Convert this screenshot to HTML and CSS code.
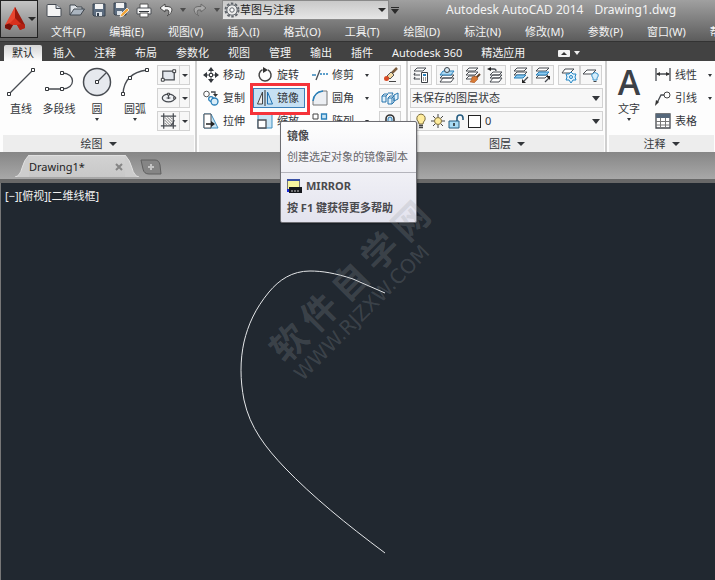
FILE: index.html
```html
<!DOCTYPE html>
<html lang="zh-CN">
<head>
  <meta charset="UTF-8">
  <meta name="viewport" content="width=device-width, initial-scale=1.0">
  <title>Autodesk AutoCAD 2014 - Drawing1.dwg</title>
  <link rel="stylesheet" href="styles.css">
</head>
<body>
  <header class="header">
    <button class="app-btn" aria-label="应用程序菜单">
      <svg width="22" height="26" viewBox="0 0 22 26">
        <path d="M11 1L1 22l5 2 3-5h4l3 5 5-2z" fill="#c32414"/>
        <path d="M11 1L1 19l4 2 6-7z" fill="#e8452f"/>
        <path d="M11 1v13l6 7 4-2z" fill="#9c180c"/>
        <path d="M1 19l5-2 3 2-3 5-5-2z" fill="#74100a"/>
        <path d="M21 19l-5-2-3 2 3 5 5-2z" fill="#b42012"/>
        <path d="M5 18l6-6 6 6-4 1H9z" fill="#d9301d"/>
      </svg>
      <span class="arrow dark"></span>
    </button>
    <div class="header-main">
      <div class="title-row">
        <div class="quick">
          <button aria-label="新建"><svg width="16" height="16" viewBox="0 0 16 16"><path d="M1 3.500q0-1 1-1h8l5 4v7q0 1-1 1H2q-1 0-1-1z" fill="#f4f4f4" stroke="#444a52"/><path d="M10 2.500v4h5" fill="#cfd5dc" stroke="#444a52"/></svg></button>
          <button aria-label="打开"><svg width="16" height="16" viewBox="0 0 16 16"><path d="M1 13V3h5l2 2h5v2" fill="#dfe3e8" stroke="#3f464e"/><path d="M1 13l4-6h10.500l-4 6z" fill="#aab4bf" stroke="#3f464e"/></svg></button>
          <button aria-label="保存"><svg width="14" height="14" viewBox="0 0 14 14"><path d="M1 1h12v12H2l-1-1z" fill="#5c6c7f" stroke="#38424e"/><path d="M3 1h8v5H3z" fill="#f3f3f3"/><path d="M4 9h6v4H4z" fill="#dce2e8"/><path d="M5 10h2v3H5z" fill="#34404e"/></svg></button>
          <button aria-label="另存为"><svg width="16" height="16" viewBox="0 0 16 16"><path d="M1 1h12v12H2l-1-1z" fill="#5c6c7f" stroke="#38424e"/><path d="M3 1h8v5H3z" fill="#f3f3f3"/><path d="M4 9h5v4H4z" fill="#dce2e8"/><path d="M14 6l2 2-6 6-3 1 1-3z" fill="#f3a63a" stroke="#fff" stroke-width=".7"/></svg></button>
          <button aria-label="打印"><svg width="16" height="15" viewBox="0 0 16 15"><path d="M4 1h8v5H4z" fill="#fff" stroke="#555"/><path d="M1 6q0-1 1-1h12q1 0 1 1v5H1z" fill="#f4f4f4" stroke="#4b4f54"/><path d="M3 8.500h10" stroke="#34383d"/><path d="M4 10h8v4H4z" fill="#fff" stroke="#555"/></svg></button>
          <button aria-label="放弃"><svg width="14" height="14" viewBox="0 0 14 14"><path d="M6 1L1 5l5 4V7q4-1 4 2t-2 4q5-2 5-6T6 3.500z" fill="#f4f4f4" stroke="#4a4a4a"/></svg></button>
          <span class="arrow small"></span>
          <button aria-label="重做"><svg width="14" height="14" viewBox="0 0 14 14"><path d="M8 1l5 4-5 4V7Q4 6 4 9t2 4Q1 11 1 7t7-3.500z" fill="#a9a9a9" stroke="#6b6b6b"/></svg></button>
          <span class="arrow small"></span>
        </div>
        <div class="workspace">
          <svg width="16" height="16" viewBox="0 0 16 16"><circle cx="8" cy="8" r="6.500" fill="none" stroke="#62676d" stroke-width="2" stroke-dasharray="2.500 1.600"/><circle cx="8" cy="8" r="5.200" fill="#eee" stroke="#62676d"/><circle cx="8" cy="8" r="2.200" fill="#fff" stroke="#62676d"/></svg>
          <select aria-label="工作空间"><option>草图与注释</option></select>
          <span class="arrow dark"></span>
        </div>
        <button class="quick-more" aria-label="自定义快速访问工具栏"><svg width="8" height="7" viewBox="0 0 8 7"><path d="M0 0h8v1H0zM0 2h8L4 7z" fill="#2a2a2a"/></svg></button>
        <h1 class="title"><span>Autodesk AutoCAD 2014</span><span>Drawing1.dwg</span></h1>
      </div>
      <nav class="menu">
        <a href="#">文件(F)</a>
        <a href="#">编辑(E)</a>
        <a href="#">视图(V)</a>
        <a href="#">插入(I)</a>
        <a href="#">格式(O)</a>
        <a href="#">工具(T)</a>
        <a href="#">绘图(D)</a>
        <a href="#">标注(N)</a>
        <a href="#">修改(M)</a>
        <a href="#">参数(P)</a>
        <a href="#">窗口(W)</a>
        <a href="#">帮助(H)</a>
      </nav>
    </div>
  </header>

  <nav class="tabs">
    <a href="#" class="active">默认</a>
    <a href="#">插入</a>
    <a href="#">注释</a>
    <a href="#">布局</a>
    <a href="#">参数化</a>
    <a href="#">视图</a>
    <a href="#">管理</a>
    <a href="#">输出</a>
    <a href="#">插件</a>
    <a href="#">Autodesk 360</a>
    <a href="#">精选应用</a>
    <button class="tabs-min" aria-label="最小化功能区">
      <svg width="12" height="7" viewBox="0 0 12 7"><rect width="12" height="7" rx="1" fill="#f2f2f2"/><path d="M6 2l3 3H3z" fill="#333"/></svg>
      <span class="arrow light"></span>
    </button>
  </nav>

  <main class="ribbon">
    <section class="panel panel-draw">
      <div class="panel-body">
        <div class="big-tools">
          <button class="big">
            <svg width="30" height="30" viewBox="0 0 30 30"><path d="M3 27L27 3" class="ln"/><path d="M1.500 25.500h3v3h-3zM25.500 1.500h3v3h-3z" class="pt"/></svg>
            <span>直线</span>
          </button>
          <button class="big">
            <svg width="30" height="30" viewBox="0 0 30 30"><path d="M3 22h15c14 0 14-16 0-16" class="ln"/><path d="M1.500 20.500h3v3h-3zM16.500 20.500h3v3h-3zM16.500 4.500h3v3h-3z" class="pt"/></svg>
            <span>多段线</span>
          </button>
          <button class="big">
            <svg width="30" height="30" viewBox="0 0 30 30"><circle cx="15" cy="15" r="13.500" fill="#e6e9ee" stroke="#484c52" stroke-width="1.500"/><path d="M15 15l9-9" class="ln"/><path d="M13.500 13.500h3v3h-3z" class="pt"/></svg>
            <span>圆</span>
            <i class="arrow"></i>
          </button>
          <button class="big">
            <svg width="30" height="30" viewBox="0 0 30 30"><path d="M3 27Q4 6 27 3" class="ln"/><path d="M1.500 25.500h3v3h-3zM25.500 1.500h3v3h-3zM8.500 9.500h3v3h-3z" class="pt"/></svg>
            <span>圆弧</span>
            <i class="arrow"></i>
          </button>
        </div>
        <div class="rows">
          <button class="split" aria-label="矩形"><svg width="22" height="18" viewBox="0 0 22 18"><path d="M5 5h12v9H5z" fill="#e3e7ed" stroke="#45494f" stroke-width="1.300"/><path d="M3.500 12.500h3v3h-3zM15.500 3.500h3v3h-3z" class="pt"/></svg><i class="arrow"></i></button>
          <button class="split" aria-label="椭圆"><svg width="22" height="18" viewBox="0 0 22 18"><ellipse cx="11" cy="9" rx="6.500" ry="4" fill="#eef0f3" stroke="#45494f" stroke-width="1.300"/><path d="M11 5v5M9 9h4" class="ln"/><path d="M10 4h2v2h-2zM16.500 8h2v2h-2z" class="pt"/></svg><i class="arrow"></i></button>
          <button class="split" aria-label="图案填充"><svg width="22" height="18" viewBox="0 0 22 18"><path d="M6 1v16M16 1v16M3 4h16M3 14h16" class="ln"/><path d="M7 8l6 6M7 5l8 8M10 5l5 5M13 5l2 2M7 11l3 3" stroke="#777" fill="none"/><path d="M13 14q3-2 4-6" class="ln"/></svg><i class="arrow"></i></button>
        </div>
      </div>
      <button class="panel-title">绘图<i class="arrow"></i></button>
    </section>

    <section class="panel panel-modify">
      <div class="panel-body">
        <div class="rows col-a">
          <button class="tool"><svg width="16" height="16" viewBox="0 0 16 16"><path d="M8 0l3 4H5zM8 16l3-4H5zM0 8l4-3v6zM16 8l-4-3v6z" fill="#33373c"/><path d="M8 3v3M8 10v3M3 8h3M10 8h3" stroke="#33373c"/><path d="M6.500 6.500h3v3h-3z" class="pt"/></svg>移动</button>
          <button class="tool"><svg width="16" height="16" viewBox="0 0 16 16"><circle cx="3.500" cy="4" r="2.800" fill="#fff" stroke="#555"/><path d="M8 2h4v3" class="ln"/><path d="M10 4h5l-2.500 3z" fill="#333"/><circle cx="8" cy="9" r="2.300" fill="#fff" stroke="#2a7fb8" stroke-width="1.300"/><circle cx="11.500" cy="11.500" r="3.500" fill="#d8ecf8" stroke="#2a7fb8" stroke-width="1.300"/></svg>复制</button>
          <button class="tool"><svg width="16" height="16" viewBox="0 0 16 16"><path d="M1 1h7l7 14H1z" fill="#c9e4f4" stroke="#3f8fc0"/><path d="M1 1h7v14H1z" fill="#fff" stroke="#4b4f55"/><path d="M3 11h6" stroke="#222" stroke-width="1.500"/><path d="M8 8l4 3-4 3z" fill="#222"/></svg>拉伸</button>
        </div>
        <div class="rows col-b">
          <button class="tool"><svg width="16" height="16" viewBox="0 0 16 16"><path d="M5.500 2.600A6 6 0 1 0 11 2.800" fill="none" stroke="#444" stroke-width="1.500"/><path d="M6 0l5 3-5 3z" fill="#333"/></svg>旋转</button>
          <div class="mirror">
            <button class="tool selected"><svg width="16" height="16" viewBox="0 0 16 16"><path d="M5.500 2v12h-5z" fill="#eee" stroke="#444"/><path d="M8 0v16" stroke="#333"/><path d="M10.500 2v12h5z" fill="#bfe0f5" stroke="#1f6fae"/></svg>镜像</button>
            <div class="highlight"></div>
            <div class="tooltip" role="tooltip">
              <div class="tip-top">
                <strong>镜像</strong>
                <p>创建选定对象的镜像副本</p>
              </div>
              <div class="tip-bottom">
                <div class="tip-cmd"><svg width="15" height="15" viewBox="0 0 15 15"><path d="M.5.500h12v11H.5z" fill="#f8f5a0" stroke="#777"/><path d="M0 0h13v2H0z" fill="#3950a5"/><path d="M2 8h13v6H2z" fill="#15171c"/><path d="M0 10h2v3H0z" fill="#1726d8"/><path d="M4 12h2M7 12h2M10 12h2" stroke="#ccc"/></svg><strong>MIRROR</strong></div>
                <strong>按 F1 键获得更多帮助</strong>
              </div>
            </div>
          </div>
          <button class="tool"><svg width="16" height="16" viewBox="0 0 16 16"><path d="M1 1h14v14H1z" fill="#c9e4f4" stroke="#3f8fc0"/><path d="M1 7h8v8H1z" fill="#fff" stroke="#4b4f55" stroke-width="1.300"/></svg>缩放</button>
        </div>
        <div class="rows col-c">
          <button class="tool"><svg width="16" height="16" viewBox="0 0 16 16"><path d="M0 8h4" stroke="#3886ba" stroke-width="1.500"/><path d="M4 13L8 3" class="ln"/><path d="M8 7h8" stroke="#2980ba" stroke-width="1.400" stroke-dasharray="2 1"/></svg>修剪<i class="arrow"></i></button>
          <button class="tool"><svg width="16" height="16" viewBox="0 0 16 16"><path d="M1 15V11Q2 2 11 1h4v14z" fill="#eceff3" stroke="#777"/><path d="M1 11Q2 2 11 1" fill="none" stroke="#2980ba" stroke-width="1.500"/></svg>圆角<i class="arrow"></i></button>
          <button class="tool"><svg width="16" height="16" viewBox="0 0 16 16"><path d="M1 1h5v5H1zM1 9h5v5H1z" fill="#fff" stroke="#444"/><path d="M9.500 1h5v5h-5zM9.500 9h5v5h-5z" fill="#c9e4f4" stroke="#2980ba" stroke-width="1.300"/></svg>阵列<i class="arrow"></i></button>
        </div>
        <div class="rows">
          <button class="icon-btn" aria-label="删除"><svg width="16" height="16" viewBox="0 0 16 16"><path d="M15 1L9 7" stroke="#7a5a3b" stroke-width="2.500"/><path d="M9 5l3 3-4 4-3-3z" fill="#f1d9a4" stroke="#555"/><circle cx="4.500" cy="11.500" r="2.500" fill="#d84c26"/><path d="M7 14.500h7" stroke="#444"/></svg></button>
          <button class="icon-btn" aria-label="分解"><svg width="18" height="16" viewBox="0 0 18 16"><path d="M1 6h4v6H1zM7 8h4v6H7zM13 5l4-2v6l-4 2z" fill="#e3f2fb" stroke="#2675ad"/><path d="M1 6l2-2h4L5 6M7 8l2-2h4l-2 2M13 8v4l-2 2M7 3h5l-1 2" fill="none" stroke="#2675ad"/></svg></button>
          <button class="icon-btn" aria-label="偏移"><svg width="16" height="16" viewBox="0 0 16 16"><path d="M1 12h3V6a4 4 0 0 1 8 0v6h3" fill="none" stroke="#333" stroke-width="1.600"/><path d="M6 14V6a2 2 0 0 1 4 0v8" fill="#c9e4f4" stroke="#2675ad"/></svg></button>
        </div>
      </div>
      <button class="panel-title" aria-label="修改"></button>
    </section>

    <section class="panel panel-layer">
      <div class="panel-body">
        <div class="rows">
          <div class="icon-row">
            <div class="group"><button class="icon-btn" aria-label="图层特性"><svg width="16" height="16" viewBox="0 0 16 16"><path d="M4 1h9l-3 3H1zM1 8h6M1 12h6" class="sheet"/><path d="M2 6l-1 2M2 10l-1 2" class="ln"/><path d="M8.500 5.500h6v10h-6z" fill="#fff" stroke="#3d4146"/><path d="M10 7h3v2h-3z" fill="#2980ba"/><path d="M10 11h1M12 11h1M10 13h1M12 13h1" stroke="#333"/></svg></button></div>
            <div class="group"><button class="icon-btn" aria-label="置为当前"><svg width="16" height="16" viewBox="0 0 16 16"><path d="M4 8h11l-3 3H1zM4 11h11l-3 4H1z" class="sheet"/><path d="M4 4h11l-3 4H1z" fill="#acd8f2" stroke="#2980ba"/><circle cx="8" cy="3" r="2.500" fill="#d7ecf8" stroke="#3c4147"/></svg></button></div>
            <div class="group">
              <button class="icon-btn" aria-label="匹配图层"><svg width="16" height="16" viewBox="0 0 16 16"><path d="M4 1h9l-3 3H1zM4 5h9l-3 3H1zM4 9h6l-3 3H1z" class="sheet"/><path d="M15 7l-4 4" stroke="#604126" stroke-width="2"/><path d="M7 10l4-1 2 3-4 4q-2-1-4-1 2-2 2-5z" fill="#d77a35" stroke="#9c4a1b" stroke-width=".5"/></svg></button>
              <button class="icon-btn" aria-label="上一个"><svg width="16" height="16" viewBox="0 0 16 16"><path d="M6 5h9l-3 3H3zM6 8h9l-3 3H3zM6 11h9l-3 4H3z" class="sheet"/><path d="M2 2h5q2 0 2 2" class="ln"/><path d="M0 2l4-2v4z" fill="#222"/></svg></button>
            </div>
            <div class="group">
              <button class="icon-btn" aria-label="隔离"><svg width="16" height="16" viewBox="0 0 16 16"><path d="M4 1h10l-3 3H1zM4 5h10l-3 3H1z" class="sheet"/><path d="M4 8h9l-3 3H1z" fill="#8ecbf0" stroke="#2980ba"/><path d="M15 10l-4 4" class="ln"/><path d="M9 16v-4l4 4z" fill="#222"/></svg></button>
              <button class="icon-btn" aria-label="取消隔离"><svg width="16" height="16" viewBox="0 0 16 16"><path d="M4 1h10l-3 3H1zM4 8h9l-3 3H1z" class="sheet"/><path d="M4 5h10l-3 3H1z" fill="#8ecbf0" stroke="#2980ba"/><path d="M10 15l4-4" class="ln"/><path d="M15 9v4l-4-4z" fill="#222"/></svg></button>
            </div>
            <div class="group">
              <button class="icon-btn" aria-label="冻结"><svg width="16" height="16" viewBox="0 0 16 16"><path d="M4 2h9l-4 4H1z" class="sheet"/><path d="M10 5l2 2h3l-1 3 1 3h-3l-2 3-2-3H5l1-3-1-3h3z" fill="#e2f3fd" stroke="#2586c4"/><circle cx="10" cy="10" r="1.500" fill="none" stroke="#2586c4"/></svg></button>
              <button class="icon-btn" aria-label="关闭"><svg width="16" height="16" viewBox="0 0 16 16"><path d="M4 3h9l-4 4H0z" class="sheet"/><path d="M10 13v-2q-2-2-1-4 3-3 6 0 1 2-1 4v2z" fill="#d5eefc" stroke="#3e96cb"/><path d="M10.500 14.500h3" stroke="#444"/></svg></button>
            </div>
          </div>
          <div class="combo">
            <select aria-label="图层状态"><option>未保存的图层状态</option></select>
            <span class="arrow"></span>
          </div>
          <div class="combo combo-layer">
            <svg width="14" height="16" viewBox="0 0 14 16"><path d="M5 11Q5 9 3 7q-1-5 4-6 5 1 4 6-2 2-2 4z" fill="#ffec9c" stroke="#7a6c3c"/><path d="M5 12.500h4M5 14.500h4" stroke="#444" stroke-width="1.300"/></svg>
            <svg width="16" height="16" viewBox="0 0 16 16"><path d="M8 1v3M8 12v3M1 8h3M12 8h3M3 3l2 2M11 11l2 2M13 3l-2 2M5 11l-2 2" stroke="#444"/><circle cx="8" cy="8" r="3.500" fill="#ffec9c" stroke="#7a6c3c"/></svg>
            <svg width="16" height="16" viewBox="0 0 16 16"><path d="M9 8V5q0-3 3-3t3 3v2" fill="none" stroke="#255c80" stroke-width="1.600"/><path d="M1 8h10v7H1z" fill="#a9dbf4" stroke="#255c80"/><path d="M6 10v3" stroke="#222" stroke-width="1.500"/></svg>
            <span class="swatch"></span>
            <select aria-label="图层"><option>0</option></select>
            <span class="arrow"></span>
          </div>
        </div>
      </div>
      <button class="panel-title">图层<i class="arrow"></i></button>
    </section>

    <section class="panel panel-note">
      <div class="panel-body">
        <button class="big">
          <span class="letter">A</span>
          <span>文字</span>
          <i class="arrow"></i>
        </button>
        <div class="rows">
          <button class="tool"><svg width="16" height="16" viewBox="0 0 16 16"><path d="M1 1v13M15 1v13M2 7h12" class="ln"/><path d="M1 7l4-2v4zM15 7l-4-2v4z" fill="#333"/></svg>线性<i class="arrow"></i></button>
          <button class="tool"><svg width="16" height="16" viewBox="0 0 16 16"><path d="M2 13l4-8h4" class="ln"/><path d="M0 16l1-6 3 2z" fill="#333"/><circle cx="12" cy="5" r="3" fill="#fff" stroke="#444"/></svg>引线<i class="arrow"></i></button>
          <button class="tool"><svg width="16" height="16" viewBox="0 0 16 16"><path d="M1 1h14v14H1z" fill="#fff" stroke="#45494f" stroke-width="1.300"/><path d="M1 1h14v4H1z" fill="#55677a"/><path d="M1 8.500h14M1 12h14M5.500 5v10M10.500 5v10" stroke="#777"/></svg>表格</button>
        </div>
      </div>
      <button class="panel-title">注释<i class="arrow"></i></button>
    </section>
  </main>

  <div class="doc-bar">
    <div class="doc-tab">
      <svg width="14" height="22" viewBox="0 0 14 22"><path d="M0 22Q5 21 7 13T14 0v22z" fill="#cdcdcd"/><path d="M0 22Q5 21 7 13T14 0" fill="none" stroke="#e0e0e0"/></svg>
      <div class="doc-name"><a href="#">Drawing1*</a><button aria-label="关闭图形"><svg width="8" height="8" viewBox="0 0 8 8"><path d="M1 1l6 6M7 1L1 7" stroke="#858585" stroke-width="2"/></svg></button></div>
      <svg width="14" height="22" viewBox="0 0 14 22"><path d="M14 22Q9 21 7 13T0 0v22z" fill="#cdcdcd"/><path d="M14 22Q9 21 7 13T0 0" fill="none" stroke="#e0e0e0"/></svg>
    </div>
    <button class="doc-new" aria-label="新图形"><svg width="22" height="16" viewBox="0 0 22 16"><path d="M1 1h14q4 0 5 5l1 9H9q-5 0-6-5z" fill="#858585" stroke="#606060"/><path d="M11 5v6M8 8h6" stroke="#c4c4c4" stroke-width="2"/></svg></button>
  </div>

  <div class="canvas">
    <div class="view-label"><button>[−]</button><button>[俯视]</button><button>[二维线框]</button></div>
    <svg class="curve" width="150" height="290" viewBox="0 0 150 290">
      <path d="M147 25L115 11C97 5 84 3 72 3C54 3 41 12 31 24C17 41 10 57 6 74C2 92 2 112 6 132C12 160 28 180 47 200C74 228 108 256 147 285" fill="none" stroke="#e4e6e8"/>
    </svg>
    <div class="watermark">
      <div class="wm-name"><span>软</span><span>件</span><span>自</span><span>学</span><span>网</span></div>
      <div class="wm-site">WWW.RJZXW.COM</div>
    </div>
  </div>
</body>
</html>
```

FILE: styles.css
```css
* { box-sizing: border-box; margin: 0; padding: 0; }
body {
  display: flex;
  flex-direction: column;
  min-height: 100vh;
  overflow: hidden;
  font-family: "Noto Sans", "Noto Sans CJK SC", sans-serif;
  font-size: 11px;
  line-height: 16px;
  color: #33363a;
  background: #212830;
}
button, select {
  font: inherit;
  color: inherit;
  border: none;
  background: none;
  white-space: nowrap;
}
select { appearance: none; outline: none; }
a { color: inherit; text-decoration: none; white-space: nowrap; }
svg { display: block; flex: none; }

.arrow {
  flex: none;
  border: 3px solid transparent;
  border-top: 4px solid #33363a;
  border-bottom: none;
}
.arrow.dark { border-width: 4px 4px 0; border-top-color: #2a2a2a; }
.arrow.small { border-top-color: #4c4c4c; }
.arrow.light { border-top-color: #eee; }
.ln { fill: none; stroke: #484c52; stroke-width: 1.3; }
.pt { fill: #fff; stroke: #33363a; }
.sheet { fill: #fff; stroke: #484c52; }

/* header */
.header {
  display: flex;
  height: 41px;
  background: linear-gradient(#a0a0a0, #5c5c5c);
  color: #f4f4f4;
}
.app-btn {
  display: flex;
  align-items: center;
  gap: 2px;
  flex: none;
  width: 38px;
  height: 38px;
  padding-left: 3px;
  border: 1px solid #222;
  background: linear-gradient(#c4c4c4, #7c7c7c);
}
.header-main { flex: 1; min-width: 0; }
.title-row { display: flex; align-items: center; height: 20px; }
.quick {
  display: flex;
  align-items: center;
  gap: 7px;
  width: 184px;
  flex: none;
  padding-left: 8px;
}
.workspace {
  display: flex;
  align-items: center;
  flex: none;
  width: 167px;
  height: 20px;
  padding: 0 2px 0 1px;
  background: linear-gradient(#c9c9c9, #e6e6e6);
  border: 1px solid #8a8a8a;
  color: #222;
}
.workspace select { flex: 1; font-size: 11px; }
.quick-more { padding: 0 4px 0 2px; }
.title {
  display: flex;
  gap: 11px;
  padding-left: 43px;
  font-size: 12px;
  font-weight: normal;
  white-space: nowrap;
}
.menu {
  display: flex;
  gap: 24px;
  padding: 4px 0 0 13px;
  overflow: hidden;
}

/* ribbon tabs */
.tabs {
  display: flex;
  align-items: flex-end;
  gap: 19px;
  height: 20px;
  padding-left: 4px;
  background: #424242;
  border-top: 1px solid #333;
  color: #f4f4f4;
  overflow: hidden;
}
.tabs .active {
  padding: 0 8px;
  margin-right: -8px;
  background: linear-gradient(#d4d4d4, #fdfdfd);
  border-radius: 2px 2px 0 0;
  color: #222;
}
.tabs-min {
  display: flex;
  align-items: center;
  gap: 4px;
  height: 16px;
  padding-left: 14px;
}

/* ribbon */
.ribbon {
  display: flex;
  height: 91px;
  padding-left: 1px;
  background: #fdfdfd;
}
.panel {
  display: flex;
  flex-direction: column;
  flex: none;
  border-right: 2px solid #cfcfcf;
}
.panel-draw { width: 196px; }
.panel-modify { width: 211px; }
.panel-layer { width: 199px; }
.panel-note { flex: 1; min-width: 108px; border-right: none; }
.panel-body { display: flex; flex: 1; padding: 4px 2px 0 1px; }
.panel-title {
  display: flex;
  align-items: center;
  justify-content: center;
  gap: 6px;
  height: 17px;
  margin: 0 1px 0 2px;
  background: #ededed;
}
.panel-title .arrow { border-width: 4px 4px 0; }
.rows { display: flex; flex-direction: column; gap: 3px; }
.big-tools { display: flex; width: 155px; }
.big {
  display: flex;
  flex-direction: column;
  align-items: center;
  flex: none;
  width: 38px;
  padding-top: 2px;
}
.big span { margin-top: 4px; }
.big .arrow { margin-top: 1px; border-width: 3px 2px 0; }
.big .letter {
  height: 30px;
  margin: 0;
  font: 600 34px/30px "Open Sans", sans-serif;
  color: #3d4147;
}
.split {
  display: flex;
  align-items: center;
  width: 33px;
  height: 20px;
  border: 1px solid #d2d2d2;
  background: #f7f7f7;
}
.split svg { border-right: 1px solid #d2d2d2; }
.split .arrow { margin-left: 2px; border-width: 3px 3px 0; }
.icon-btn {
  display: flex;
  align-items: center;
  justify-content: center;
  width: 22px;
  height: 20px;
  border: 1px solid #d2d2d2;
  background: #f7f7f7;
}
.tool {
  display: flex;
  align-items: center;
  gap: 4px;
  height: 20px;
}
.tool .arrow { margin-left: 7px; border-width: 3px 2px 0; }
.panel-modify .panel-body { padding-left: 6px; }
.col-a, .col-b { width: 54px; }
.col-c { width: 68px; padding-left: 1px; }
.mirror { position: relative; height: 20px; }
.tool.selected {
  width: 52px;
  margin-left: -4px;
  padding-left: 3px;
  border: 1px solid #3a7fb8;
  background: #c6e0f3;
}
.highlight {
  position: absolute;
  left: -7px;
  top: -5px;
  width: 60px;
  height: 32px;
  border: 3px solid #f5333a;
  pointer-events: none;
}
.tooltip {
  position: absolute;
  left: 23px;
  top: 33px;
  z-index: 2;
  width: 137px;
  border: 1px solid #6d6d72;
  border-radius: 2px;
  background: linear-gradient(#fefefe, #e3e3ee);
  color: #4a4a4e;
  white-space: nowrap;
  box-shadow: 1px 1px 2px rgba(0,0,0,0.3);
}
.tip-top { padding: 6px 0 7px 6px; border-bottom: 1px solid #b4b4bc; }
.tip-top p { margin-top: 5px; color: #66666a; }
.tip-bottom { padding: 5px 0 6px 6px; }
.tip-cmd { display: flex; align-items: center; gap: 4px; margin-bottom: 6px; }

.icon-row { display: flex; gap: 4px; }
.group { display: flex; }
.panel-layer .panel-body { padding-left: 2px; }
.panel-layer .rows { flex: 1; }
.combo {
  display: flex;
  align-items: center;
  height: 20px;
  padding: 0 2px 0 1px;
  border: 1px solid #d2d2d2;
  background: #f7f7f7;
}
.combo select { flex: 1; }
.combo .arrow { border-width: 5px 4px 0; }
.combo-layer { padding-left: 3px; gap: 2px; }
.swatch {
  width: 13px;
  height: 13px;
  margin: 0 2px;
  border: 1px solid #222;
  background: #fff;
}
.panel-note .panel-body { padding-left: 3px; }
.panel-note .rows { margin-left: 7px; }

/* drawing tabs */
.doc-bar {
  display: flex;
  align-items: flex-end;
  gap: 1px;
  height: 31px;
  padding: 0 0 2px 15px;
  background: linear-gradient(#868686, #a8a8a8);
  border-bottom: 4px solid #686868;
}
.doc-tab { display: flex; }
.doc-name {
  display: flex;
  align-items: center;
  justify-content: space-between;
  width: 96px;
  height: 22px;
  padding-right: 2px;
  border-top: 1px solid #e0e0e0;
  background: linear-gradient(#d2d2d2, #c8c8c8);
  color: #222;
}
.doc-name a { font-size: 11px; }
.doc-new { margin-bottom: 2px; }

/* drawing area */
.canvas {
  position: relative;
  flex: 1;
  border-left: 1px solid #777;
  background: #212830;
}
.view-label {
  display: flex;
  padding: 5px 0 0 4px;
  color: #f2f2f2;
}
.curve {
  position: absolute;
  left: 237px;
  top: 85px;
}
.watermark {
  position: absolute;
  left: 252px;
  top: 76px;
  z-index: 3;
  color: rgba(150,155,160,0.24);
  font-weight: bold;
  white-space: nowrap;
  transform: rotate(-45deg);
  pointer-events: none;
}
.wm-name {
  display: flex;
  gap: 7px;
  font-size: 36px;
  line-height: 40px;
}
.wm-site {
  font-family: "DejaVu Sans", sans-serif;
  font-size: 20px;
  font-weight: normal;
  line-height: 20px;
}
```
